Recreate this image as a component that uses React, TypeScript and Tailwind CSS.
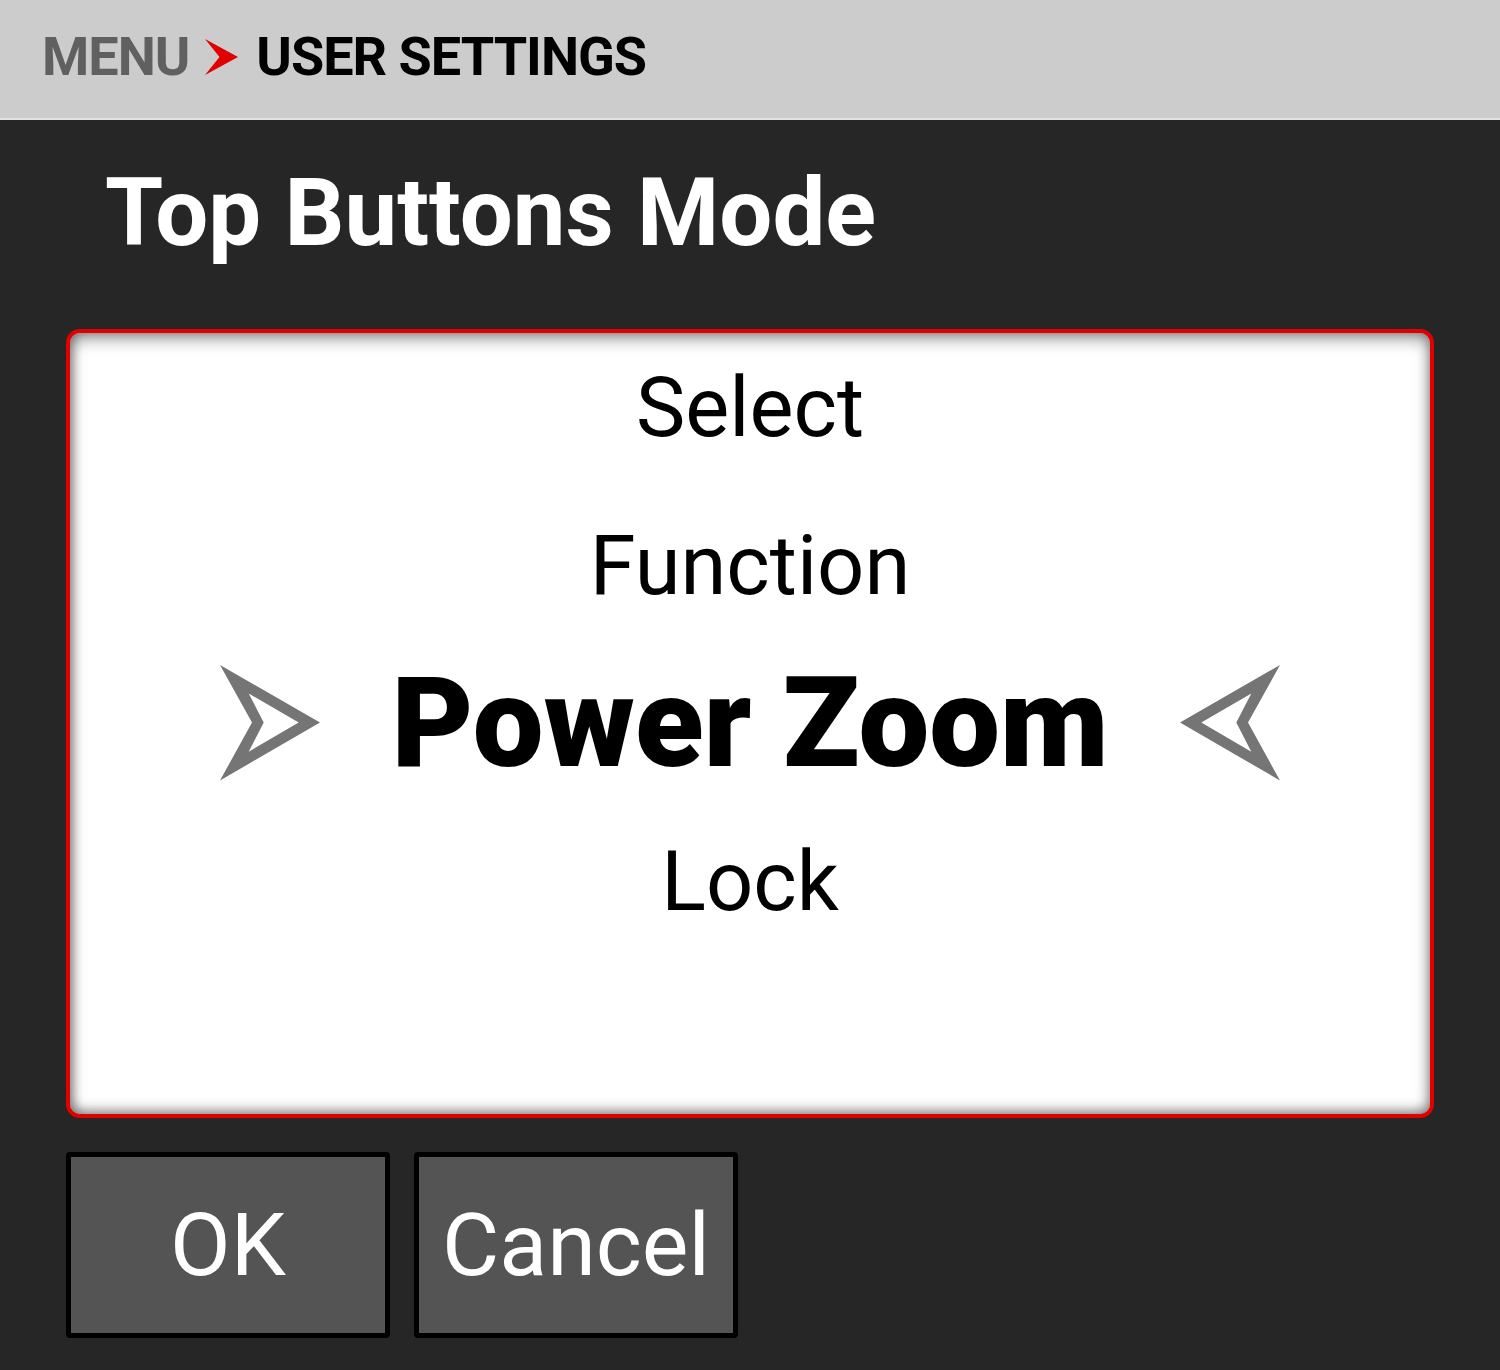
const ROWS = [
  { label: "Select", current: false },
  { label: "Function", current: false },
  { label: "Power Zoom", current: true },
  { label: "Lock", current: false },
  { label: "", current: false },
];

function Chevron({ flip = false }: { flip?: boolean }) {
  return (
    <svg
      width="101"
      height="116"
      viewBox="0 0 101 116"
      className={flip ? "-scale-x-100" : ""}
    >
      <path
        fillRule="evenodd"
        fill="#757575"
        d="M0 0 L100 57.5 L0 115.5 L32 57.5 Z M28.7 28.5 L43.7 57.5 L28.7 86.7 L78.7 57.5 Z"
      />
    </svg>
  );
}

export default function App() {
  return (
    <main
      className="w-[1500px] h-[1370px] bg-[#262626] flex flex-col overflow-hidden"
      style={{ fontFamily: "Roboto, 'Liberation Sans', sans-serif" }}
    >
      {/* Breadcrumb */}
      <div className="h-[120px] shrink-0 bg-[#cccccc] border-b-2 border-[#e2e2e2] flex items-center pl-[42px] pb-[5px]">
        <div className="flex items-center text-[54px] font-bold leading-none tracking-[-1px]">
          <span className="text-[#606060]">MENU</span>
          <svg width="33" height="36" viewBox="0 0 33 36" className="ml-[16px] mr-[18px]">
            <path d="M0 0 L33 18 L0 36 L14.5 18 Z" fill="#e00000" />
          </svg>
          <span className="text-black">USER SETTINGS</span>
        </div>
      </div>

      {/* Title */}
      <h1 className="pl-[105px] pt-[46px] text-[94px] leading-[94px] font-bold text-white">
        Top Buttons Mode
      </h1>

      {/* Picker */}
      <div className="mt-[69px] mx-[66px] h-[789px] rounded-[14px] border-4 border-[#e00000] bg-white shadow-[inset_0_6px_16px_rgba(0,0,0,0.4),inset_0_-5px_12px_rgba(0,0,0,0.3),inset_4px_0_10px_rgba(0,0,0,0.15)] overflow-hidden">
        <div className="-mt-[5px] flex flex-col">
          {ROWS.map((row, i) =>
            row.current ? (
              <div key={i} className="h-[158px] flex items-center justify-center gap-[70px]">
                <Chevron />
                <span className="text-[126px] leading-none font-black text-black">
                  {row.label}
                </span>
                <Chevron flip />
              </div>
            ) : (
              <div
                key={i}
                className="h-[158px] flex items-center justify-center text-[83px] leading-none text-black"
              >
                {row.label}
              </div>
            )
          )}
        </div>
      </div>

      {/* Actions */}
      <div className="mt-[34px] ml-[66px] flex gap-[24px]">
        <button className="w-[324px] h-[186px] rounded-[4px] border-[5px] border-black bg-[#545454] text-white text-[88px] leading-none">
          OK
        </button>
        <button className="w-[324px] h-[186px] rounded-[4px] border-[5px] border-black bg-[#545454] text-white text-[88px] leading-none">
          Cancel
        </button>
      </div>
    </main>
  );
}
